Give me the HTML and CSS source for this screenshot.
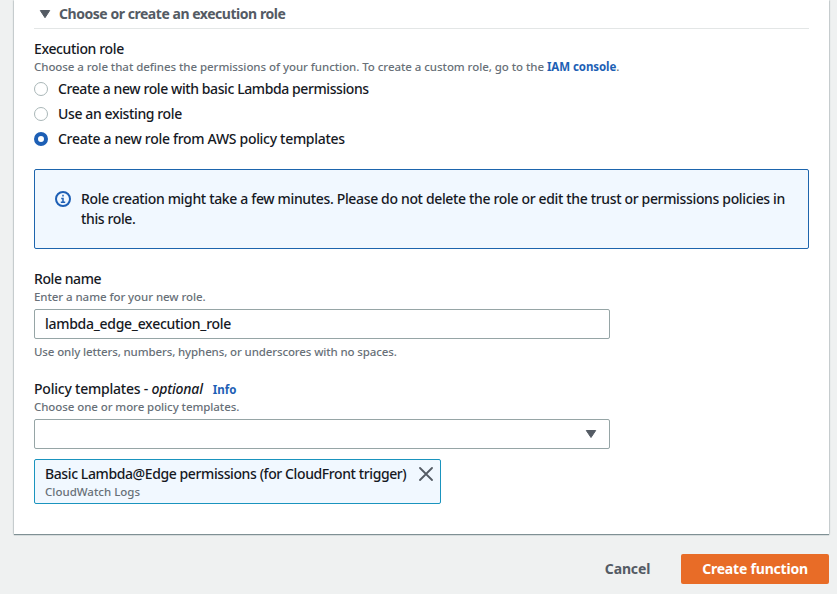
FILE: index.html
```html
<!DOCTYPE html>
<html lang="en">
<head>
<meta charset="utf-8">
<title>Create function</title>
<link rel="stylesheet" href="styles.css">
</head>
<body>
<main class="panel">
  <header class="section-head">
    <svg class="caret" width="12" height="10" viewBox="0 0 12 10"><path d="M1.3 1.5h9.4L6 8.7z"/></svg>
    <h2><span class="t-head">Choose or create an execution role</span></h2>
  </header>

  <section class="role">
    <div class="label"><span class="t-exec">Execution role</span></div>
    <div class="hint"><span class="t-choose">Choose a role that defines the permissions of your function. To create a custom role, go to the </span><a class="t-iam">IAM console</a>.</div>
    <div class="radios">
      <label class="radio"><i class="dot"></i><span class="t-basic">Create a new role with basic Lambda permissions</span></label>
      <label class="radio"><i class="dot"></i><span class="t-existing">Use an existing role</span></label>
      <label class="radio"><i class="dot on"></i><span class="t-templates">Create a new role from AWS policy templates</span></label>
    </div>
  </section>

  <div class="alert">
    <svg class="info-icon" width="16" height="16" viewBox="0 0 16 16"><circle cx="8" cy="8" r="7"/><path d="M8 3.8v1.8M6.2 7.4H8v4M5.8 11.3h4.4"/></svg>
    <p><span class="t-alert">Role creation might take a few minutes. Please do not delete the role or edit the trust or permissions policies in</span><br><span class="t-alert2">this role.</span></p>
  </div>

  <section class="field">
    <div class="label"><span class="t-name">Role name</span></div>
    <div class="hint"><span class="t-enter">Enter a name for your new role.</span></div>
    <div class="input"><span class="t-value">lambda_edge_execution_role</span></div>
    <div class="hint below"><span class="t-only">Use only letters, numbers, hyphens, or underscores with no spaces.</span></div>
  </section>

  <section class="field policy">
    <div class="label"><span class="t-policy">Policy templates - </span><em class="t-optional">optional</em><a class="info">Info</a></div>
    <div class="hint"><span class="t-more">Choose one or more policy templates.</span></div>
    <div class="input select"><svg class="caret" width="12" height="8" viewBox="0 0 12 8"><path d="M1.3.5h9.4L6 7.5z"/></svg></div>
    <div class="token">
      <div>
        <div class="token-title"><span class="t-token">Basic Lambda@Edge permissions (for CloudFront trigger)</span></div>
        <div class="hint"><span class="t-logs">CloudWatch Logs</span></div>
      </div>
      <svg class="close" width="14" height="14" viewBox="0 0 14 14"><path d="M1 1l12 12M13 1L1 13"/></svg>
    </div>
  </section>
</main>
<footer class="actions">
  <button class="cancel"><span class="t-cancel">Cancel</span></button>
  <button class="primary"><span class="t-create">Create function</span></button>
</footer>
</body>
</html>
```
FILE: styles.css
```css
* { box-sizing: border-box; }
body {
  margin: 0;
  height: 594px;
  overflow: hidden;
  background: #eff1f1;
  color: #16191f;
  font: 500 14px/20px "Noto Sans", sans-serif;
}
svg { flex: none; }
.panel {
  width: 815px;
  height: 534px;
  margin-left: 14px;
  padding: 0 20px;
  background: #fff;
  box-shadow: 0 1px 1px #7f9094, 0 0 2px #a0a8aa;
}
.section-head {
  display: flex;
  align-items: center;
  gap: 8px;
  height: 29px;
  padding-left: 5px;
  border-bottom: 1px solid #e3e6e6;
  color: #545b64;
}
h2 { margin: 0; font-size: 14px; font-weight: 700; line-height: 20px; }
.caret { fill: #545b64; stroke: #545b64; stroke-linejoin: round; }
.label { height: 20px; white-space: nowrap; }
.hint {
  height: 16px;
  color: #687078;
  font-size: 11.5px;
  line-height: 16px;
  white-space: nowrap;
}
a { color: #1d5fb5; font-weight: 700; }
.role { padding-top: 10px; }
.radios { display: grid; gap: 5px; padding-top: 4px; }
.radio { display: flex; align-items: center; gap: 10px; height: 20px; white-space: nowrap; }
.dot {
  width: 14px;
  height: 14px;
  border: 1px solid #aab7b8;
  border-radius: 50%;
  background: #fff;
}
.dot.on { border: 4px solid #1d5fb5; }
.alert {
  display: flex;
  gap: 10px;
  height: 80px;
  margin-top: 20px;
  padding: 19px 20px;
  border: 1px solid #1d65ad;
  border-radius: 2px;
  background: #f1f8ff;
}
.alert p { margin: 0; white-space: nowrap; }
.info-icon { margin-top: 2px; fill: none; stroke: #1d5fb5; stroke-width: 2; }
.info-icon path { stroke-width: 1.5; }
.field { padding-top: 20px; }
.input {
  display: flex;
  align-items: center;
  width: 576px;
  height: 30px;
  margin-top: 4px;
  padding: 0 10px;
  border: 1px solid #96a5a6;
  border-radius: 2px;
}
.select { justify-content: flex-end; padding-right: 12px; }
.below { margin-top: 5px; }
.policy { padding-top: 19px; }
.info { margin-left: 10px; font-size: 11.5px; }
.token {
  display: flex;
  justify-content: space-between;
  width: 407px;
  height: 45px;
  margin-top: 10px;
  padding: 4px 7px 0 10px;
  border: 1px solid #1a94be;
  border-radius: 2px;
  background: #f1f8ff;
}
.token-title { height: 20px; white-space: nowrap; }
.close { margin-top: 3px; stroke: #545b64; stroke-width: 1.8; stroke-linecap: round; }
.actions { display: flex; justify-content: flex-end; gap: 10px; padding: 20px 8px 0 0; }
button {
  height: 30px;
  padding: 0;
  border: 0;
  border-radius: 2px;
  background: transparent;
  color: #545b64;
  font: 700 14px/20px "Noto Sans", sans-serif;
  white-space: nowrap;
}
.cancel { width: 87px; }
.primary { width: 148px; background: #e86c27; color: #fff; }

/* Tracking per text run */
.t-head { letter-spacing: -.46px; }
.t-exec { letter-spacing: -.36px; }
.t-choose { letter-spacing: -.058px; }
.t-iam { letter-spacing: -.08px; }
.t-basic { letter-spacing: -.41px; }
.t-existing { letter-spacing: -.38px; }
.t-templates { letter-spacing: -.3px; }
.t-alert { letter-spacing: -.345px; }
.t-alert2 { letter-spacing: -.38px; }
.t-name { letter-spacing: -.42px; }
.t-enter { letter-spacing: -.07px; }
.t-value { letter-spacing: -.28px; }
.t-only { letter-spacing: -.125px; }
.t-policy { letter-spacing: -.22px; }
.t-optional { letter-spacing: -.2px; }
.t-more { letter-spacing: -.08px; }
.t-token { letter-spacing: -.4px; }
.t-cancel { letter-spacing: -.15px; }
.t-create { letter-spacing: -.2px; }
```
